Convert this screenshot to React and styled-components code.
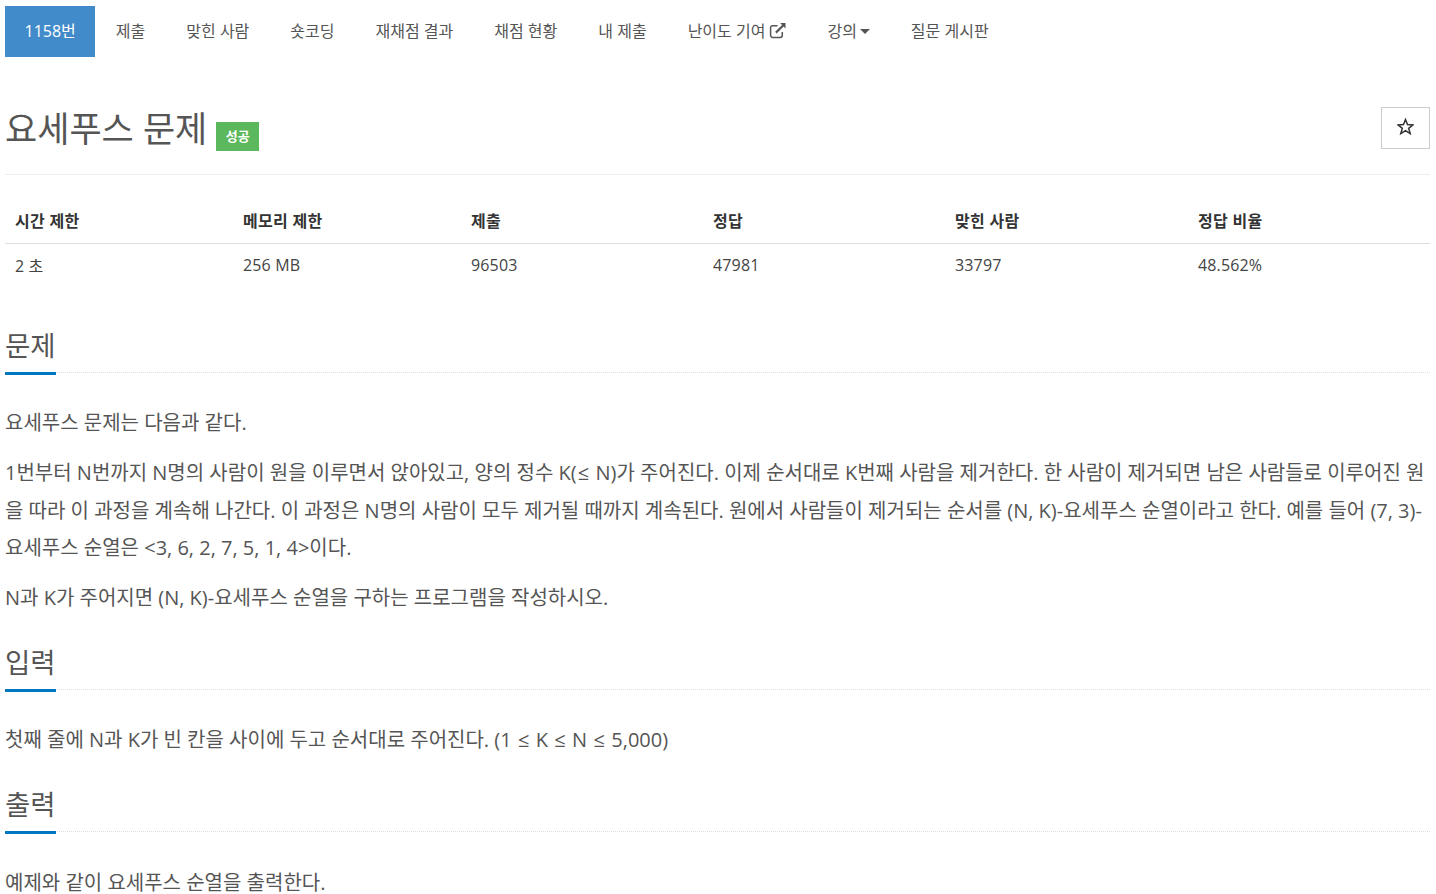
import React from 'react';
import styled, { createGlobalStyle } from 'styled-components';

const Global = createGlobalStyle`
  html, body { margin: 0; padding: 0; background: #fff; }
  body { font-family: "Open Sans", "Noto Sans CJK KR", sans-serif; color: #555; height: 894px; overflow: hidden; }
`;
const Page = styled.div`
  padding: 6px 6px 0 5px;
`;
const Nav = styled.ul`
  display: flex;
  list-style: none;
  margin: 0;
  padding: 0;
  height: 51px;
`;
const NavItem = styled.li`
  display: flex;
  align-items: center;
  padding: 0 ${p => (p.$active ? '19.5px' : '20.5px')} 3px;
  box-sizing: border-box;
  height: 51px;
  font-size: 16px;
  white-space: nowrap;
  color: ${p => (p.$active ? '#fff' : '#555')};
  background: ${p => (p.$active ? '#428bca' : 'transparent')};
`;
const LinkIcon = styled.svg`
  width: 17px;
  height: 17px;
  margin-left: 4px;
  fill: none;
  stroke: #555;
`;
const Caret = styled.span`
  width: 0;
  height: 0;
  margin: 3px 0 0 3px;
  border-left: 5px solid transparent;
  border-right: 5px solid transparent;
  border-top: 5px solid #555;
`;
const TitleBar = styled.div`
  display: flex;
  justify-content: space-between;
  align-items: flex-start;
  margin-top: 50px;
  height: 67px;
  border-bottom: 1px solid #eee;
`;
const Title = styled.h1`
  display: flex;
  align-items: flex-start;
  margin: 2px 0 0;
  font-size: 35px;
  line-height: 40px;
  font-weight: 400;
  color: #555;
`;
const Badge = styled.span`
  width: 43px;
  height: 29px;
  margin: 13px 0 0 9px;
  display: flex;
  align-items: center;
  justify-content: center;
  background: #5cb85c;
  color: #fff;
  font-size: 13px;
  font-weight: 700;
  line-height: 1;
`;
const StarButton = styled.button`
  width: 49px;
  height: 42px;
  display: flex;
  align-items: center;
  justify-content: center;
  padding: 0 1px 4px 0;
  background: #fff;
  border: 1px solid #ccc;
`;
const StarIcon = styled.svg`
  width: 17px;
  height: 17px;
  fill: none;
  stroke: #333;
  stroke-width: 1.5;
`;
const Table = styled.table`
  width: 100%;
  margin-top: 26px;
  border-collapse: collapse;
  table-layout: fixed;
  font-size: 16px;
`;
const Th = styled.th`
  height: 42px;
  padding: 0 10px 4px;
  box-sizing: border-box;
  text-align: left;
  font-size: 16px;
  font-weight: 700;
  letter-spacing: 0.3px;
  color: #333;
  border-bottom: 1px solid #ddd;
`;
const Td = styled.td`
  height: 42px;
  padding: 2px 10px 0;
  box-sizing: border-box;
  letter-spacing: 0.15px;
  color: #444;
`;
const Section = styled.section`
  margin-top: ${p => p.$top}px;
`;
const Heading = styled.div`
  height: 41px;
  border-bottom: 1px dotted #ddd;
`;
const HeadingText = styled.h2`
  margin: 0;
  display: inline-block;
  position: relative;
  height: 41px;
  font-size: 27.5px;
  line-height: 30px;
  font-weight: 400;
  color: #555;
  &::after {
    content: '';
    position: absolute;
    left: 0;
    right: 0;
    bottom: -3px;
    height: 3px;
    background: #0076c0;
  }
`;
const Body = styled.div`
  padding-top: ${p => p.$pad || 31}px;
`;
const P = styled.p`
  margin: 0 0 12.5px;
  font-size: 20px;
  line-height: 37.5px;
  color: #555;
  &:last-child { margin-bottom: 0; }
`;
const Le = styled.span`
  padding: 0 1.15px;
`;

const navItems = ['제출', '맞힌 사람', '숏코딩', '재채점 결과', '채점 현황', '내 제출'];
const heads = ['시간 제한', '메모리 제한', '제출', '정답', '맞힌 사람', '정답 비율'];
const vals = ['2 초', '256 MB', '96503', '47981', '33797', '48.562%'];
const widths = [228, 228, 242, 242, 243, 242];

export default function App() {
  return (
    <Page>
      <Global />
      <Nav>
        <NavItem $active>1158번</NavItem>
        {navItems.map(t => <NavItem key={t}>{t}</NavItem>)}
        <NavItem>
          난이도 기여
          <LinkIcon viewBox="0 0 16 16">
            <path d="M12.5 9.5v3a2 2 0 0 1-2 2h-7a2 2 0 0 1-2-2v-7a2 2 0 0 1 2-2h4.5" strokeWidth="1.4" />
            <path d="M6.5 10L14 2.5" strokeWidth="2" />
            <path d="M10.5 1h5v5z" fill="#555" stroke="none" />
          </LinkIcon>
        </NavItem>
        <NavItem>강의<Caret /></NavItem>
        <NavItem>질문 게시판</NavItem>
      </Nav>
      <TitleBar>
        <Title>요세푸스 문제<Badge>성공</Badge></Title>
        <StarButton aria-label="star">
          <StarIcon viewBox="0 0 17 17">
            <polygon points="8.5,1.5 10.5,6.6 16,6.9 11.7,10.3 13.2,15.6 8.5,12.6 3.8,15.6 5.3,10.3 1,6.9 6.5,6.6" />
          </StarIcon>
        </StarButton>
      </TitleBar>
      <Table>
        <colgroup>{widths.map((w, i) => <col key={i} style={{ width: w }} />)}</colgroup>
        <thead><tr>{heads.map(h => <Th key={h}>{h}</Th>)}</tr></thead>
        <tbody><tr>{vals.map(v => <Td key={v}>{v}</Td>)}</tr></tbody>
      </Table>
      <Section $top={46}>
        <Heading><HeadingText>문제</HeadingText></Heading>
        <Body>
          <P>요세푸스 문제는 다음과 같다.</P>
          <P>1번부터 N번까지 N명의 사람이 원을 이루면서 앉아있고, 양의 정수 K(<Le>≤</Le> N)가 주어진다. 이제 순서대로 K번째 사람을 제거한다. 한 사람이 제거되면 남은 사람들로 이루어진 원을 따라 이 과정을 계속해 나간다. 이 과정은 N명의 사람이 모두 제거될 때까지 계속된다. 원에서 사람들이 제거되는 순서를 (N, K)-요세푸스 순열이라고 한다. 예를 들어 (7, 3)-요세푸스 순열은 &lt;3, 6, 2, 7, 5, 1, 4&gt;이다.</P>
          <P>N과 K가 주어지면 (N, K)-요세푸스 순열을 구하는 프로그램을 작성하시오.</P>
        </Body>
      </Section>
      <Section $top={31}>
        <Heading><HeadingText>입력</HeadingText></Heading>
        <Body><P>첫째 줄에 N과 K가 빈 칸을 사이에 두고 순서대로 주어진다. (1 <Le>≤</Le> K <Le>≤</Le> N <Le>≤</Le> 5,000)</P></Body>
      </Section>
      <Section $top={32}>
        <Heading><HeadingText>출력</HeadingText></Heading>
        <Body $pad={32}><P>예제와 같이 요세푸스 순열을 출력한다.</P></Body>
      </Section>
    </Page>
  );
}
